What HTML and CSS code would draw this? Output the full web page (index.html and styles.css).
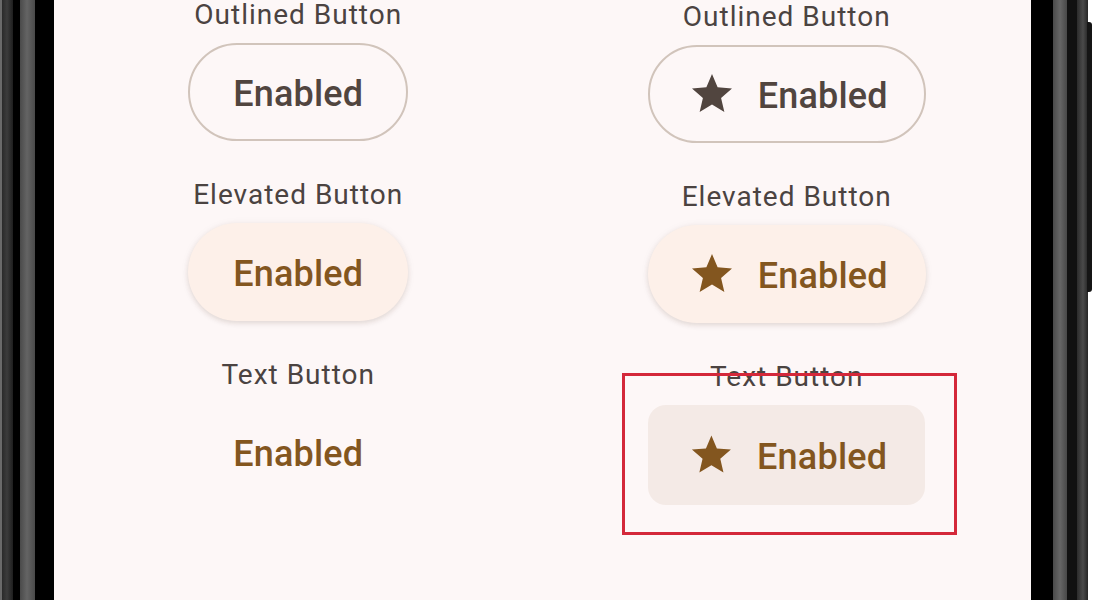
FILE: index.html
```html
<!DOCTYPE html>
<html>
<head>
  <title>Buttons</title>
  <link rel="stylesheet" href="styles.css">
</head>
<body>
  <div class="phone">
    <div class="bezel bezel-left"></div>
    <div class="screen">
      <div class="column column-left">
        <div class="item">
          <div class="label">Outlined Button</div>
          <button class="btn btn-outlined">Enabled</button>
        </div>
        <div class="item">
          <div class="label">Elevated Button</div>
          <button class="btn btn-elevated">Enabled</button>
        </div>
        <div class="item">
          <div class="label">Text Button</div>
          <button class="btn btn-text">Enabled</button>
        </div>
      </div>
      <div class="column column-right">
        <div class="item">
          <div class="label">Outlined Button</div>
          <button class="btn btn-outlined btn-icon">
            <svg class="star" viewBox="0 0 24 24"><path d="M12 17.27L18.18 21l-1.64-7.03L22 9.24l-7.19-.61L12 2 9.19 8.63 2 9.24l5.46 4.73L5.82 21z"/></svg>
            Enabled
          </button>
        </div>
        <div class="item">
          <div class="label">Elevated Button</div>
          <button class="btn btn-elevated btn-icon">
            <svg class="star" viewBox="0 0 24 24"><path d="M12 17.27L18.18 21l-1.64-7.03L22 9.24l-7.19-.61L12 2 9.19 8.63 2 9.24l5.46 4.73L5.82 21z"/></svg>
            Enabled
          </button>
        </div>
        <div class="item">
          <div class="label">Text Button</div>
          <button class="btn btn-text btn-icon btn-pressed">
            <svg class="star" viewBox="0 0 24 24"><path d="M12 17.27L18.18 21l-1.64-7.03L22 9.24l-7.19-.61L12 2 9.19 8.63 2 9.24l5.46 4.73L5.82 21z"/></svg>
            Enabled
          </button>
        </div>
      </div>
      <div class="highlight"></div>
    </div>
    <div class="bezel bezel-right"></div>
    <div class="side-key"></div>
  </div>
</body>
</html>
```

FILE: styles.css
```css
body {
  margin: 0;
  background: #ffffff;
  font-family: Roboto, "Noto Sans", sans-serif;
  overflow: hidden;
}
.phone {
  display: flex;
  height: 600px;
}
.bezel {
  flex: none;
  height: 100%;
}
.bezel-left {
  width: 54px;
  background: linear-gradient(to right,
    #6a6a6a 0, #6a6a6a 2px,
    #2a2a2a 2px, #3c3c3c 7px, #1e1e1e 13px,
    #000000 13px, #000000 20px,
    #4a4a4a 20px, #646464 27px, #4a4a4a 35px,
    #000000 35px, #000000 54px);
}
.bezel-right {
  width: 57px;
  background: linear-gradient(to right,
    #000000 0, #000000 22px,
    #4a4a4a 22px, #666666 29px, #484848 36px,
    #111111 36px, #111111 46px,
    #2c2c2c 46px, #4a4a4a 52px, #262626 57px);
}
.side-key {
  flex: none;
  width: 5px;
  height: 270px;
  margin-top: 22px;
  margin-left: -1px;
  background: #151515;
  border-radius: 0 3px 3px 0;
}
.screen {
  position: relative;
  flex: none;
  width: 977px;
  height: 100%;
  background: #fdf7f7;
  display: grid;
  grid-template-columns: 1fr 1fr;
  align-items: start;
}
.column {
  display: flex;
  flex-direction: column;
  align-items: center;
}
.column-left {
  margin-top: -2px;
}
.column-right {
  margin-top: 0;
}
.item {
  display: flex;
  flex-direction: column;
  align-items: center;
  margin-bottom: 37px;
}
.label {
  font-size: 28px;
  line-height: 34px;
  letter-spacing: 1px;
  color: #4b4341;
  margin-bottom: 11px;
}
.btn {
  display: flex;
  align-items: center;
  justify-content: center;
  gap: 22px;
  box-sizing: border-box;
  height: 98px;
  padding: 3px 45px 0;
  border: none;
  border-radius: 49px;
  background: transparent;
  font-family: Roboto, "Noto Sans", sans-serif;
  font-size: 36px;
  font-weight: 500;
  letter-spacing: 0.2px;
  color: #83561f;
}
.btn-icon {
  padding: 3px 38px 0 40px;
}
.star {
  width: 48px;
  height: 48px;
  margin-top: -3px;
  fill: currentColor;
}
.btn-outlined {
  border: 2px solid #d1c4bb;
  padding-left: 43px;
  padding-right: 43px;
  color: #51453f;
}
.btn-outlined.btn-icon {
  padding-left: 38px;
  padding-right: 36px;
}
.btn-elevated {
  background: #fdf0e9;
  box-shadow: 0 2px 5px rgba(80, 50, 30, 0.13), 0 1px 10px rgba(80, 50, 30, 0.05);
}
.btn-pressed {
  background: #f4eae6;
  border-radius: 18px;
  height: 100px;
  width: 277px;
}
.highlight {
  position: absolute;
  left: 568px;
  top: 373px;
  width: 335px;
  height: 162px;
  box-sizing: border-box;
  border: 3px solid #d4283a;
}
```
